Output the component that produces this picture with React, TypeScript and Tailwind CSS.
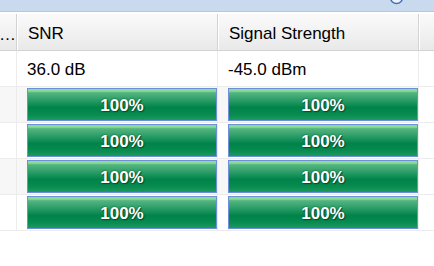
import React from 'react';

const rows = [0, 1, 2, 3];

const Bar: React.FC<{ value: string }> = ({ value }) => (
  <div className="h-[33px] border border-[#6f8fd9] bg-[linear-gradient(to_bottom,#86de94_0%,#86de94_7%,#55b481_12%,#2a9d67_36%,#00834a_60%,#078b4f_82%,#1e9a5d_100%)] flex items-center justify-center pt-[2px]">
    <span className="text-white font-bold text-[17px] leading-none [text-shadow:0_0_2px_#04502a,1px_1px_1px_#04502a]">
      {value}
    </span>
  </div>
);

const App: React.FC = () => {
  return (
    <div className="w-[434px] h-[266px] bg-white overflow-hidden font-['Liberation_Sans',Arial,sans-serif] text-[17px] text-black">
      {/* window strip */}
      <div className="relative h-[12px] bg-[#c9daef] border-b border-[#b3c8e4]">
        <svg className="absolute left-[389px] -top-[10px]" width="15" height="15" viewBox="0 0 15 15">
          <circle cx="7.5" cy="7.5" r="6" fill="#eef3fb" stroke="#3f6fbf" strokeWidth="1.5" />
        </svg>
      </div>

      <div className="mt-[2px]">
        {/* header */}
        <div className="grid grid-cols-[17px_201px_201px_15px] h-[37px] border-b border-[#d3d3d3] bg-[linear-gradient(to_bottom,#fafafa,#f2f2f2_50%,#e9e9e9)]">
          <div className="border-r border-[#d2d2d2] flex items-center overflow-hidden pt-[4px]">
            <span className="-ml-[1px] leading-none">…</span>
          </div>
          <div className="border-l border-white border-r border-r-[#d2d2d2] flex items-center pl-[10px] pt-[3px]">SNR</div>
          <div className="border-l border-white border-r border-r-[#d2d2d2] flex items-center pl-[10px] pt-[3px]">Signal Strength</div>
          <div className="border-l border-white" />
        </div>

        {/* first data row */}
        <div className="grid grid-cols-[17px_201px_201px_15px] h-[36px] border-b border-[#ececec]">
          <div className="border-r border-[#ececec]" />
          <div className="border-r border-[#ececec] flex items-center pl-[10px] pt-[3px]">36.0 dB</div>
          <div className="border-r border-[#ececec] flex items-center pl-[10px] pt-[3px]">-45.0 dBm</div>
          <div />
        </div>

        {rows.map((i) => (
          <div
            key={i}
            className={
              'grid grid-cols-[17px_201px_201px_15px] h-[36px] border-b border-[#ececec] ' +
              (i % 2 === 0 ? 'bg-[#f7f7f7]' : 'bg-white')
            }
          >
            <div className="border-r border-[#ececec]" />
            <div className="border-r border-[#ececec] pl-[10px] pt-[1px]">
              <Bar value="100%" />
            </div>
            <div className="border-r border-[#ececec] pl-[10px] pt-[1px]">
              <Bar value="100%" />
            </div>
            <div className="bg-white" />
          </div>
        ))}
      </div>
    </div>
  );
};

export default App;
